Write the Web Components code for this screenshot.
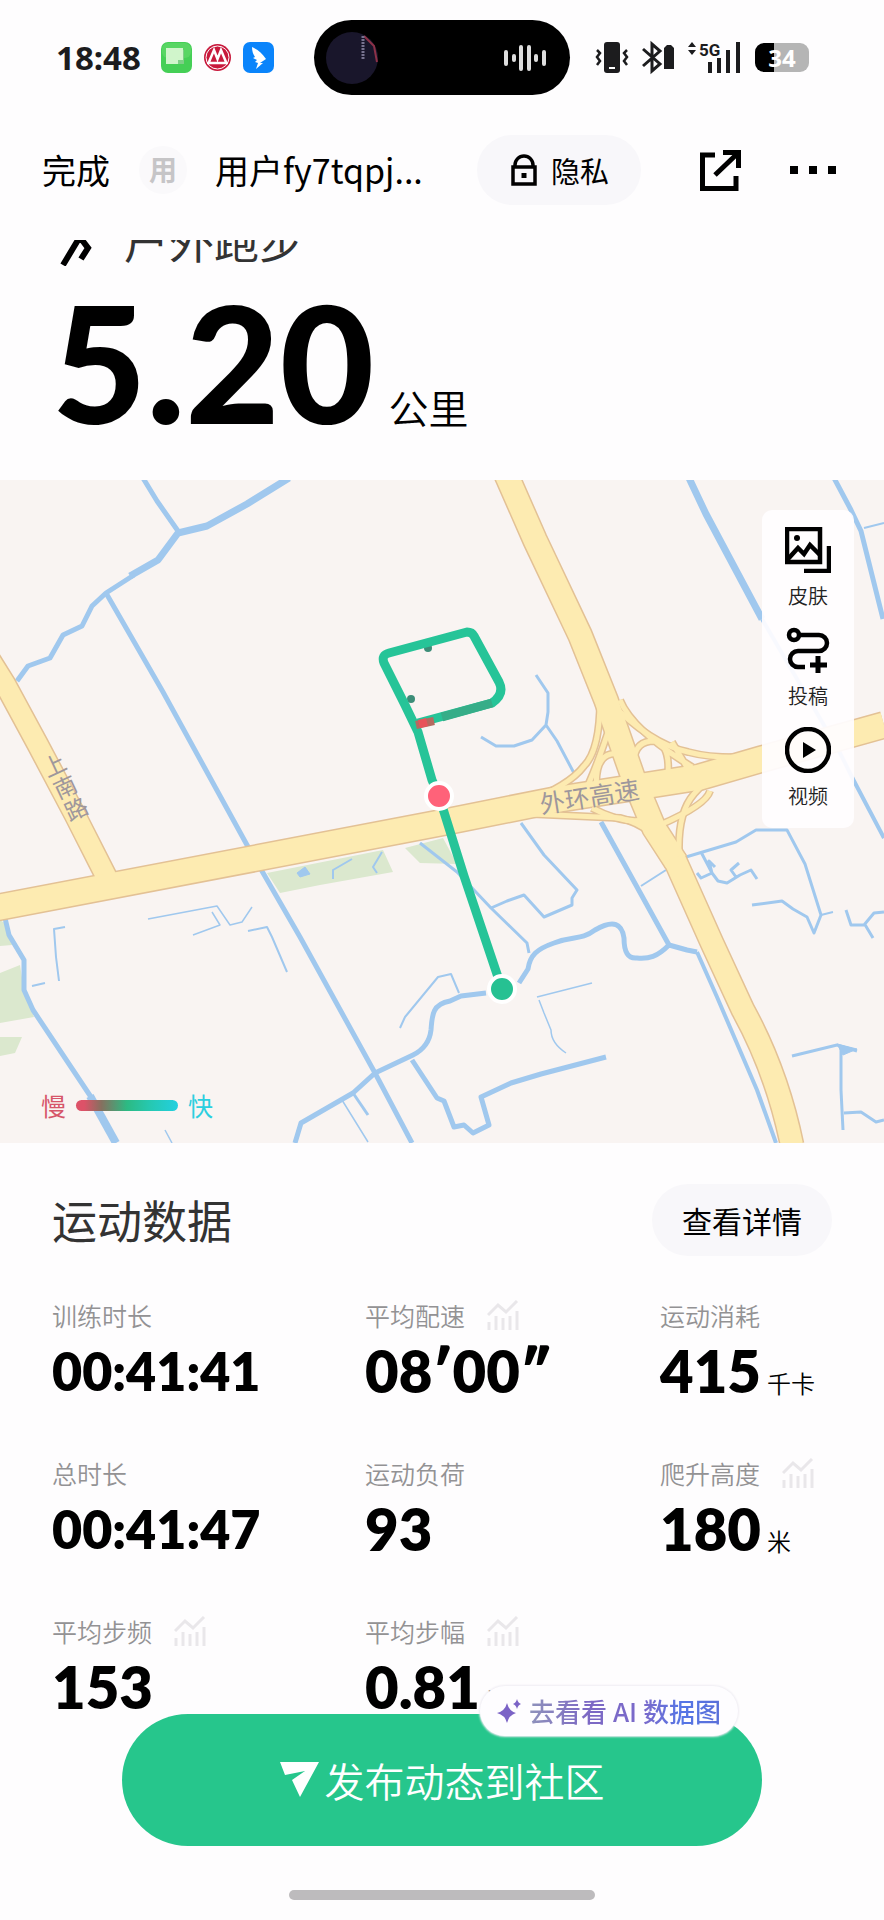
<!DOCTYPE html>
<html lang="zh-CN">
<head>
<meta charset="utf-8">
<meta name="viewport" content="width=device-width, initial-scale=1">
<title>户外跑步</title>
<style>
  body {
    margin: 0;
    min-height: 100vh;
    background: #fefdfe;
    color: #000;
    font-family: "Noto Sans CJK SC", "Noto Sans", sans-serif;
    --number-font: Lato, "Noto Sans", sans-serif;
    --pill: #f8f7fa;
    --green: #26c68c;
  }
</style>
</head>
<body>
<run-page>
  <status-bar slot="status" time="18:48" battery="34"></status-bar>
  <top-bar slot="top" user="用户fy7tqpj..." initial="用"></top-bar>
  <run-summary distance="5.20" unit="公里">户外跑步</run-summary>
  <route-map>
    <map-tool icon="skin">皮肤</map-tool>
    <map-tool icon="route">投稿</map-tool>
    <map-tool icon="video">视频</map-tool>
  </route-map>
  <stat-section heading="运动数据" more="查看详情">
    <stat-item label="训练时长" value="00:41:41" long></stat-item>
    <stat-item label="平均配速" value="08′00″" chart></stat-item>
    <stat-item label="运动消耗" value="415" unit="千卡"></stat-item>
    <stat-item label="总时长" value="00:41:47" long></stat-item>
    <stat-item label="运动负荷" value="93"></stat-item>
    <stat-item label="爬升高度" value="180" unit="米" chart></stat-item>
    <stat-item label="平均步频" value="153" chart></stat-item>
    <stat-item label="平均步幅" value="0.81" unit="米" chart></stat-item>
  </stat-section>
  <publish-bar slot="footer" tip="去看看 AI 数据图">发布动态到社区</publish-bar>
</run-page>

<script>
  // attach an open shadow root and fill it from a template
  function render(host, html) {
    const template = document.createElement('template');
    template.innerHTML = html;
    host.attachShadow({ mode: 'open' });
    host.shadowRoot.appendChild(template.content.cloneNode(true));
  }

  class RunPage extends HTMLElement {
    constructor() {
      super();
      render(this, `
        <style>
          :host { display: block; }
          main { overflow: hidden; }
          footer {
            position: fixed;
            left: 0;
            right: 0;
            bottom: 0;
          }
        </style>
        <slot name="status"></slot>
        <slot name="top"></slot>
        <main><slot></slot></main>
        <footer><slot name="footer"></slot></footer>
      `);
    }
  }

  class StatusBar extends HTMLElement {
    constructor() {
      super();
      render(this, `
        <style>
          :host {
            display: grid;
            grid-template-columns: 1fr 256px 1fr;
            align-items: center;
            height: 115px;
          }
          svg { display: block; flex: none; overflow: visible; }
          .left {
            display: flex;
            align-items: center;
            gap: 12px;
            padding-left: 56px;
          }
          .time {
            margin-right: 8px;
            font: 700 33px/40px "Noto Sans", sans-serif;
            color: #1c1c1e;
          }
          .island {
            display: flex;
            align-items: center;
            justify-content: space-between;
            height: 75px;
            padding: 0 24px 0 12px;
            box-sizing: border-box;
            border-radius: 38px;
            background: #000;
          }
          .right {
            display: flex;
            align-items: center;
            gap: 14px;
            padding-left: 26px;
          }
          .signal {
            display: flex;
            align-items: flex-start;
            color: #1c1c1e;
          }
          .battery {
            width: 54px;
            height: 29px;
            border-radius: 9px;
            background: linear-gradient(90deg, #000 36%, #b5b5b5 36%);
            color: #fff;
            font: 700 24px/29px "Open Sans", sans-serif;
            text-align: center;
          }
        </style>
        <div class="left">
          <span class="time"></span>
          <svg width="31" height="31" viewBox="0 0 31 31">
            <rect width="31" height="31" rx="7" fill="#45cf56"/>
            <rect x="1" y="1" width="29" height="15" rx="6" fill="#6bdd70" opacity=".5"/>
            <path d="M8 8h15v14H8z" fill="#7fcf87"/>
            <path d="M5 6h17v12h-5v4H5z" fill="#d0f5cb"/>
          </svg>
          <svg width="27" height="27" viewBox="0 0 27 27">
            <circle cx="13.5" cy="13.5" r="13.5" fill="#c8193c"/>
            <circle cx="13.5" cy="13.5" r="11.5" fill="none" stroke="#fff" stroke-width="1"/>
            <path d="M5 18 10 6l3.500 9L17 6l5 12M3 19h21" fill="none" stroke="#fff" stroke-width="2.500"/>
          </svg>
          <svg width="31" height="31" viewBox="0 0 31 31">
            <rect width="31" height="31" rx="7" fill="#0a84fb"/>
            <path d="M9 5c6 3 10 6 14 12l-6 4h3l-7 6 2-6-3-1 2-2-4-2 2-1c-2-3-3-6-3-10z" fill="#fff"/>
          </svg>
        </div>
        <div class="island">
          <svg width="52" height="52" viewBox="0 0 52 52">
            <circle cx="26" cy="26" r="26" fill="#19162b"/>
            <path d="M38 4l10 10 3 16" fill="none" stroke="#8c3148" stroke-width="2"/>
            <path d="M37 4v24" stroke="#77728f" stroke-width="3" stroke-dasharray="2 1"/>
          </svg>
          <svg width="42" height="28" viewBox="0 0 42 28" stroke="#dedede" stroke-width="4" stroke-linecap="round">
            <path d="M2 8v12M10 12v4M17 3v22M25 3v22M32 12v4M40 8v12"/>
          </svg>
        </div>
        <div class="right">
          <svg width="32" height="31" viewBox="0 0 32 31">
            <rect x="8" width="16" height="31" rx="3" fill="#1c1c1e"/>
            <rect x="13" y="25" width="6" height="2" fill="#fff"/>
            <path d="M1 8l3 3-3 4 3 4-3 4M31 8l-3 3 3 4-3 4 3 4" fill="none" stroke="#1c1c1e" stroke-width="2.500"/>
          </svg>
          <svg width="32" height="31" viewBox="0 0 32 31">
            <path d="M1 7l17 15-8 7V2l8 7L1 24" fill="none" stroke="#1c1c1e" stroke-width="3"/>
            <path d="M22 6l3-3h4l3 3v21H22z" fill="#1c1c1e"/>
          </svg>
          <svg width="53" height="31" viewBox="0 0 53 31" fill="#1c1c1e">
            <path d="M0 5l4-5 4 5zM0 8h8l-4 5z"/>
            <text x="11" y="14" font-family="Roboto, sans-serif" font-weight="700" font-size="17">5G</text>
            <path d="M20 20h4v11h-4zM29 16h4v15h-4zM38 8h4v23h-4zM48 0h4v31h-4z"/>
          </svg>
          <div class="battery"></div>
        </div>
      `);
    }

    connectedCallback() {
      this.shadowRoot.querySelector('.time').textContent = this.getAttribute('time');
      this.shadowRoot.querySelector('.battery').textContent = this.getAttribute('battery');
    }
  }

  class TopBar extends HTMLElement {
    constructor() {
      super();
      render(this, `
        <style>
          :host {
            display: flex;
            align-items: center;
            height: 110px;
            padding: 0 47px 15px 42px;
          }
          button {
            border: 0;
            padding: 0;
            background: none;
            color: #000;
            font: 400 34px/48px "Noto Sans CJK SC", sans-serif;
          }
          svg { display: block; }
          .avatar {
            width: 48px;
            height: 48px;
            margin: 0 28px 0 29px;
            border-radius: 50%;
            background: #faf9fb;
            color: #c6c5c7;
            font: 700 28px/46px "Noto Sans CJK SC", sans-serif;
            text-align: center;
          }
          .user { font-size: 34px; line-height: 48px; }
          .privacy {
            display: flex;
            align-items: center;
            gap: 14px;
            height: 70px;
            margin-left: auto;
            padding: 0 32px 0 34px;
            border-radius: 35px;
            background: var(--pill);
            font-size: 29px;
          }
          .share { margin: 0 48px 0 59px; }
        </style>
        <button class="done">完成</button>
        <span class="avatar"></span>
        <span class="user"></span>
        <button class="privacy">
          <svg width="26" height="32" viewBox="0 0 26 32" fill="none" stroke="#000" stroke-width="3.500">
            <path d="M2 13h22v17H2zM4 13v-2a9 9 0 0 1 18 0v2"/>
            <path d="M10.500 19h5v5h-5z" fill="#000" stroke="none"/>
          </svg>
          隐私
        </button>
        <button class="share" aria-label="分享">
          <svg width="41" height="41" viewBox="0 0 41 41" fill="none" stroke="#000" stroke-width="5">
            <path d="M15 5H2.500v33.500H36V26M15 25 37 4M23 2.500h15.500V18"/>
          </svg>
        </button>
        <button class="menu" aria-label="更多">
          <svg width="48" height="8" viewBox="0 0 48 8"><path d="M1 0h8v8H1zM20 0h8v8h-8zM39 0h8v8h-8z"/></svg>
        </button>
      `);
    }

    connectedCallback() {
      this.shadowRoot.querySelector('.user').textContent = this.getAttribute('user');
      this.shadowRoot.querySelector('.avatar').textContent = this.getAttribute('initial');
    }
  }

  class RunSummary extends HTMLElement {
    constructor() {
      super();
      render(this, `
        <style>
          :host {
            display: flow-root;
            height: 240px;
            padding: 0 52px;
          }
          /* scrolled part way under the top bar */
          .type {
            display: flex;
            align-items: center;
            gap: 32px;
            height: 60px;
            margin-top: -30px;
            padding-left: 8px;
            color: #333;
            font-size: 45px;
            line-height: 60px;
          }
          .distance {
            display: flex;
            align-items: baseline;
            gap: 14px;
            margin-top: 11px;
          }
          .value { font: 900 163px/160px var(--number-font); }
          .unit { font-size: 40px; font-weight: 350; }
        </style>
        <div class="type">
          <svg width="32" height="52" viewBox="0 0 32 52" fill="none" stroke="#000" stroke-width="6">
            <path d="M3 51 18 26h4l6 8-7 11"/><circle cx="24" cy="12" r="4"/>
          </svg>
          <slot></slot>
        </div>
        <div class="distance"><span class="value"></span><span class="unit"></span></div>
      `);
    }

    connectedCallback() {
      this.shadowRoot.querySelector('.value').textContent = this.getAttribute('distance');
      this.shadowRoot.querySelector('.unit').textContent = this.getAttribute('unit');
    }
  }

  class RouteMap extends HTMLElement {
    constructor() {
      super();
      render(this, `
        <style>
          :host { display: block; position: relative; }
          .map { display: block; width: 100%; height: auto; background: #f9f4f2; }
          .park { fill: #dbe8ce; }
          .water { fill: none; stroke: #a0c8ee; stroke-linejoin: round; }
          .edge { fill: none; stroke: #e3c195; }
          .road { fill: none; stroke: #fdebb1; }
          .name { fill: #9e979c; font-size: 23px; }
          .route { fill: none; stroke: #26c498; stroke-width: 9; stroke-linejoin: round; }
          .tools {
            position: absolute;
            top: 30px;
            right: 30px;
            display: flex;
            flex-direction: column;
            gap: 19px;
            width: 92px;
            padding: 17px 0 20px;
            border-radius: 10px;
            background: rgba(255, 253, 255, .93);
          }
          .legend {
            position: absolute;
            left: 41px;
            bottom: 20px;
            display: flex;
            align-items: center;
            gap: 10px;
            font-size: 25px;
            line-height: 36px;
          }
          .slow { color: #d6566a; }
          .fast { color: #2ccfdf; }
          .scale {
            width: 102px;
            height: 11px;
            border-radius: 6px;
            background: linear-gradient(90deg, #dd5268 8%, #85705f 25%, #2cba83 50%, #26c8b0 72%, #22d0e0);
          }
        </style>
        <svg class="map" viewBox="0 480 884 663" role="img" aria-label="跑步路线">
          <g class="park">
            <path d="M267 873 383 850l10 22-73 13-40 8zM405 848l38-10 14 26-37-1zM0 920l8 5 4 20-12 1zM0 973l20-8 4 25 10 27-34 6zM0 1037h22l-7 16-15 3z"/>
          </g>
          <g class="water">
            <g stroke-width="7">
              <path d="M289 478 247 504l-40 22-29 7-20 27-28 16"/>
              <path d="M689 478 706 514l56 105"/>
            </g>
            <g stroke-width="5">
              <path d="M143 478l14 23 21 30"/>
              <path d="M134 575 106 593 92 606 82 626 63 635 50 658 28 666 17 681"/>
              <path d="M106 593 163 692 247 845 300 937 375 1073 412 1143"/>
              <path d="M762 619 839 751l15 30 30 57" stroke-width="4"/>
              <path d="M834 478l17 32 10 21 22 88"/>
              <path d="M5 918l4 17 15 25v30l9 20 60 90"/>
              <path d="M90 1096l26 47" stroke-width="8"/>
              <path d="M295 1143l6-20 52-30 22-20 38-18q16-8 18-25c1-16 2-26 19-29l11-5 25-3"/>
              <path d="M519 983l9-14c2-14 9-20 26-26 21-8 26-2 41-13 19-11 27-6 29 8 0 14 4 21 13 20 12 1 20-1 32-13l18 5 10 2"/>
              <path d="M353 1093l15 22" stroke-width="3"/>
              <path d="M412 1060l25 38 7 3 10 26 10-2 9 8 16-8-8-28 30-14 30-9 65-17"/>
              <path d="M601 822l36 65 32 58"/>
              <path d="M697 952l20 45 40 93 19 53" stroke-width="4"/>
            </g>
            <g stroke-width="3">
              <path d="M536 675l12 18v19l-2 13-14 15-18 6h-18l-15-9M546 725l11 16 18 34"/>
              <path d="M65 927l-11 2 2 28 3 24M352 859l-19 11v9M248 931l19-4 5 10 15 35" stroke-width="2"/>
              <path d="M420 843l37 29 34 36 36 35 2 10"/>
              <path d="M521 823l23 32 33 35-5 8v7l-28 12-20-22-17 6-16 7"/>
              <path d="M686 857l50-15 20-12h31l18 34 16 51-7 18-7-16-14-8-11-8-30 4"/>
              <path d="M701 852l11 21 6 8 9 2 13-8 11-5 6 9M697 873l4 5 11-5-3-12 6 6M736 877l-5-7 8-7"/>
              <path d="M846 910l5 15h13l10-12 10-1M864 923l9 15"/>
              <path d="M792 1056l45-11 20 6M841 1047v43l2 40M844 1113l17-1 15 10 8-2"/>
            </g>
            <g stroke-width="2">
              <path d="M864 528l20-5M400 1028l5-11 33-40 13-3 8 19M641 886l25-16M32 986l13-3M821 915l12-3"/>
              <path d="M382 852l-9 15 4 6"/>
            </g>
            <g stroke-width="1.500">
              <path d="M148 919l69-13 13 19 12-3 10-15M193 935l27-10-8-13M342 1100l26 42M165 1130l7 13M537 997l55-14M539 1000l5 13 7 17c0 10 6 17 15 23"/>
            </g>
            <path d="M297 873l8-6 5 7-10 3zM837 1044l20 5-14 6z" fill="#a0c8ee"/>
          </g>

          <!-- roads: a darker line under each one leaves its edges -->
          <g class="edge">
            <path d="M-10 660 5 684l33 61 37 70 33 65" stroke-width="23"/>
            <g stroke-width="8">
              <path d="M600 700q0 50-16 66-15 20-60 37M608 700q42 44 80 52 30 8 76 4M532 814l88 4q34 8 50 40M764 766q-52 5-70 28-16 18-15 58"/>
              <path d="M612 720q-16 50-30 78M620 700q12 30 72 67M597 796q-4-38 14-42 16-4 20 18M668 774q2-30-14-33-18 0-20 18M592 808q30 16 52 12M660 825q46-20 50-34M672 742l20 34"/>
            </g>
          </g>
          <g class="edge">
            <path d="M-5 908 440 823l120-24 140-22 62-18 122-34" stroke-width="28"/>
            <path d="M506 474 535 540l45 95 26 65 28 80 20 48 22 34" stroke-width="26"/>
            <path d="M674 858l38 85 31 67q34 62 49 135" stroke-width="25"/>
          </g>
          <g class="road">
            <path d="M-10 660 5 684l33 61 37 70 33 65" stroke-width="20"/>
            <g stroke-width="5">
              <path d="M600 700q0 50-16 66-15 20-60 37M608 700q42 44 80 52 30 8 76 4M532 814l88 4q34 8 50 40M764 766q-52 5-70 28-16 18-15 58"/>
              <path d="M612 720q-16 50-30 78M620 700q12 30 72 67M597 796q-4-38 14-42 16-4 20 18M668 774q2-30-14-33-18 0-20 18M592 808q30 16 52 12M660 825q46-20 50-34M672 742l20 34"/>
            </g>
            <path d="M-5 908 440 823l120-24 140-22 62-18 122-34" stroke-width="25"/>
            <path d="M506 474 535 540l45 95 26 65 28 80 20 48 22 34" stroke-width="23"/>
            <path d="M674 858l38 85 31 67q34 62 49 135" stroke-width="22"/>
          </g>

          <g class="name" text-anchor="middle">
            <text transform="translate(58 773) rotate(-25)">上</text>
            <text transform="translate(69 795) rotate(-25)">南</text>
            <text transform="translate(80 817) rotate(-25)">路</text>
            <text transform="translate(591 806) rotate(-9)" font-size="25">外环高速</text>
          </g>

          <circle cx="411" cy="699" r="4" fill="#3c8d78"/>
          <circle cx="428" cy="648" r="4" fill="#3c8d78"/>
          <path class="route" d="M439 796l-7-16-14-48-13-27-21-42q-3-8 5-10l78-21q5 0 7 4l25 46q6 12-7 21l-74 20M439 796l25 80 38 113"/>
          <path d="M492 703l-50 14" stroke="#36ad88" stroke-width="9"/>
          <path d="M434 721l-18 4" stroke="#b46a60" stroke-width="8"/>
          <path d="M427 722l-8 2" stroke="#e8535a" stroke-width="8"/>
          <circle cx="439" cy="796" r="13" fill="#ff6279" stroke="#fff" stroke-width="4"/>
          <circle cx="502" cy="989" r="13" fill="#26c192" stroke="#fff" stroke-width="4"/>
        </svg>
        <div class="tools"><slot></slot></div>
        <div class="legend"><span class="slow">慢</span><span class="scale"></span><span class="fast">快</span></div>
      `);
    }
  }

  const toolIcons = {
    skin: `
      <path d="M2 2h33v33H2z"/><path d="M3 32l10-11 6 6 6-9 10 10" stroke-linejoin="miter"/>
      <circle cx="12" cy="11" r="3" fill="#000" stroke="none"/><path d="M19 44h25V19"/>`,
    route: `
      <circle cx="9" cy="8" r="5"/>
      <path d="M14 8h20a7 7 0 0 1 0 16H13a8 8 0 0 0 0 16h7"/><path d="M33 29v17M25 38h17" stroke-width="5"/>`,
    video: `
      <circle cx="23" cy="23" r="21"/><path d="M18 15l13 8-13 8z" fill="#000" stroke="none"/>`
  };

  class MapTool extends HTMLElement {
    constructor() {
      super();
      render(this, `
        <style>
          :host { display: block; }
          button {
            display: flex;
            flex-direction: column;
            align-items: center;
            gap: 11px;
            width: 100%;
            padding: 0;
            border: 0;
            background: none;
            color: #222;
            font: 350 20px/24px "Noto Sans CJK SC", sans-serif;
          }
        </style>
        <button>
          <svg width="46" height="46" viewBox="0 0 46 46" fill="none" stroke="#000" stroke-width="4.500"></svg>
          <span><slot></slot></span>
        </button>
      `);
    }

    connectedCallback() {
      this.shadowRoot.querySelector('svg').innerHTML = toolIcons[this.getAttribute('icon')];
    }
  }

  class StatSection extends HTMLElement {
    constructor() {
      super();
      render(this, `
        <style>
          :host { display: block; padding: 41px 52px 200px; }
          header {
            display: flex;
            align-items: center;
            justify-content: space-between;
            margin-bottom: 43px;
          }
          h2 {
            margin: 0;
            color: #333;
            font-size: 45px;
            font-weight: 400;
            line-height: 72px;
          }
          button {
            height: 72px;
            padding: 0 30px;
            border: 0;
            border-radius: 36px;
            background: var(--pill);
            color: #000;
            font: 400 30px/72px "Noto Sans CJK SC", sans-serif;
          }
          .grid {
            display: grid;
            grid-template-columns: 313fr 295fr 172fr;
            grid-auto-rows: 114px;
            row-gap: 44px;
          }
        </style>
        <header><h2></h2><button></button></header>
        <div class="grid"><slot></slot></div>
      `);
    }

    connectedCallback() {
      this.shadowRoot.querySelector('h2').textContent = this.getAttribute('heading');
      this.shadowRoot.querySelector('button').textContent = this.getAttribute('more');
    }
  }

  class StatItem extends HTMLElement {
    constructor() {
      super();
      render(this, `
        <style>
          :host { display: block; white-space: nowrap; }
          .label {
            display: flex;
            align-items: center;
            gap: 22px;
            height: 32px;
            color: #939294;
            font-size: 25px;
            font-weight: 350;
          }
          .label svg { display: none; }
          :host([chart]) .label svg { display: block; }
          .line {
            display: flex;
            align-items: baseline;
            gap: 6px;
            margin-top: 4px;
            line-height: 72px;
          }
          .value { font: 800 58px/72px var(--number-font); }
          :host([long]) .value { font-size: 52px; }
          .unit { font-size: 24px; font-weight: 350; }
        </style>
        <div class="label">
          <span></span>
          <svg width="32" height="30" viewBox="0 0 32 30" fill="none" stroke="#e9e7ea" stroke-width="3">
            <path d="M1 15 11 5l8 7L30 1M2 22v8M9 16v14M16 18v12M23 16v14M30 11v19"/>
          </svg>
        </div>
        <div class="line"><span class="value"></span><span class="unit"></span></div>
      `);
    }

    connectedCallback() {
      this.shadowRoot.querySelector('.label span').textContent = this.getAttribute('label');
      this.shadowRoot.querySelector('.value').textContent = this.getAttribute('value');
      this.shadowRoot.querySelector('.unit').textContent = this.getAttribute('unit') || '';
    }
  }

  class PublishBar extends HTMLElement {
    constructor() {
      super();
      render(this, `
        <style>
          :host {
            display: flex;
            flex-direction: column;
            align-items: center;
            gap: 44px;
            padding: 0 122px 20px;
          }
          .wrap { position: relative; align-self: stretch; }
          button { border: 0; padding: 0; }
          .publish {
            display: flex;
            align-items: center;
            justify-content: center;
            gap: 6px;
            width: 100%;
            height: 132px;
            border-radius: 66px;
            background: var(--green);
            color: #fff;
            font: 350 40px/60px "Noto Sans CJK SC", sans-serif;
          }
          .tip {
            position: absolute;
            top: -28px;
            right: 24px;
            display: flex;
            align-items: center;
            justify-content: center;
            gap: 8px;
            width: 258px;
            height: 50px;
            border-radius: 25px;
            background: #fefdff;
            box-shadow: 0 0 2px 1px #efedf3;
          }
          .tip span {
            background: linear-gradient(90deg, #8f93bb, #7c68c4 30%, #7a6acb 60%, #5575e6 80%, #5a6fd8);
            -webkit-background-clip: text;
            background-clip: text;
            color: transparent;
            font: 500 26px/36px "Noto Sans CJK SC", sans-serif;
          }
          .home {
            width: 306px;
            height: 10px;
            border-radius: 5px;
            background: #bdbbbd;
          }
        </style>
        <div class="wrap">
          <button class="publish">
            <svg width="39" height="36" viewBox="0 0 39 36" fill="#fff"><path d="M0 0h39L20 35l-8-17 13-9L5 13z"/></svg>
            <slot></slot>
          </button>
          <button class="tip">
            <svg width="24" height="24" viewBox="0 0 24 24" fill="#7b63c6"><path d="M10 4q2 8 9 10-7 2-9 10-2-8-10-10 8-2 10-10zM20 0q1 4 4 5-3 1-4 5-1-4-4-5 3-1 4-5z"/></svg>
            <span></span>
          </button>
        </div>
        <div class="home"></div>
      `);
    }

    connectedCallback() {
      this.shadowRoot.querySelector('.tip span').textContent = this.getAttribute('tip');
    }
  }

  customElements.define('run-page', RunPage);
  customElements.define('status-bar', StatusBar);
  customElements.define('top-bar', TopBar);
  customElements.define('run-summary', RunSummary);
  customElements.define('route-map', RouteMap);
  customElements.define('map-tool', MapTool);
  customElements.define('stat-section', StatSection);
  customElements.define('stat-item', StatItem);
  customElements.define('publish-bar', PublishBar);
</script>
</body>
</html>
